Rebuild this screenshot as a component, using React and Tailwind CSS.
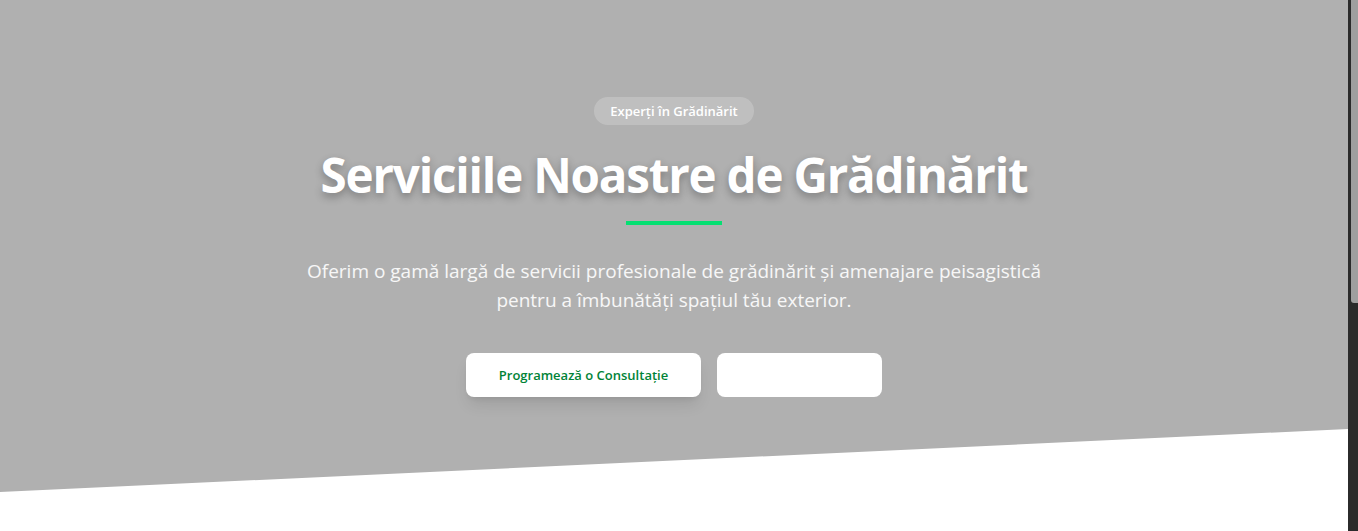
export default function App() {
  return (
    <div className="flex h-screen w-full overflow-hidden bg-white font-['Open_Sans','Noto_Sans',sans-serif]">
      <main className="flex-1 min-w-0">
        <section className="h-[492px] bg-[#b0b0b0] [clip-path:polygon(0_0,100%_0,100%_87.2%,0_100%)]">
          <div className="mx-auto flex max-w-5xl flex-col items-center px-4 pt-[97px] text-center">
            <span className="rounded-full bg-white/20 px-4 py-1 text-[13px] leading-5 font-semibold text-white">
              Experți în Grădinărit
            </span>

            <h1 className="mt-5 text-[47.5px] leading-[60px] font-bold tracking-tight text-white [text-shadow:0_4px_8px_rgba(0,0,0,0.3)]">
              Serviciile Noastre de Grădinărit
            </h1>

            <div className="mt-4 h-1 w-24 bg-green-400" />

            <p className="mt-8 max-w-[765px] text-[19px] leading-[29px] text-white/90">
              Oferim o gamă largă de servicii profesionale de grădinărit și
              amenajare peisagistică pentru a îmbunătăți spațiul tău exterior.
            </p>

            <div className="mt-[38px] flex gap-4">
              <button
                type="button"
                className="w-[235px] rounded-lg bg-white px-8 py-3 text-[13px] leading-5 font-semibold text-green-700 shadow-lg"
              >
                Programează o Consultație
              </button>
              <button
                type="button"
                className="w-[165px] rounded-lg bg-white px-8 py-3 text-[13px] leading-5 font-semibold text-white"
              >
                Vezi Servicii
              </button>
            </div>
          </div>
        </section>
      </main>

      {/* scrollbar */}
      <div className="w-[10px] shrink-0 bg-[#2b2b2b]">
        <div className="ml-[3px] h-[303px] rounded-bl-[3px] bg-[#9f9f9f]" />
      </div>
    </div>
  );
}
